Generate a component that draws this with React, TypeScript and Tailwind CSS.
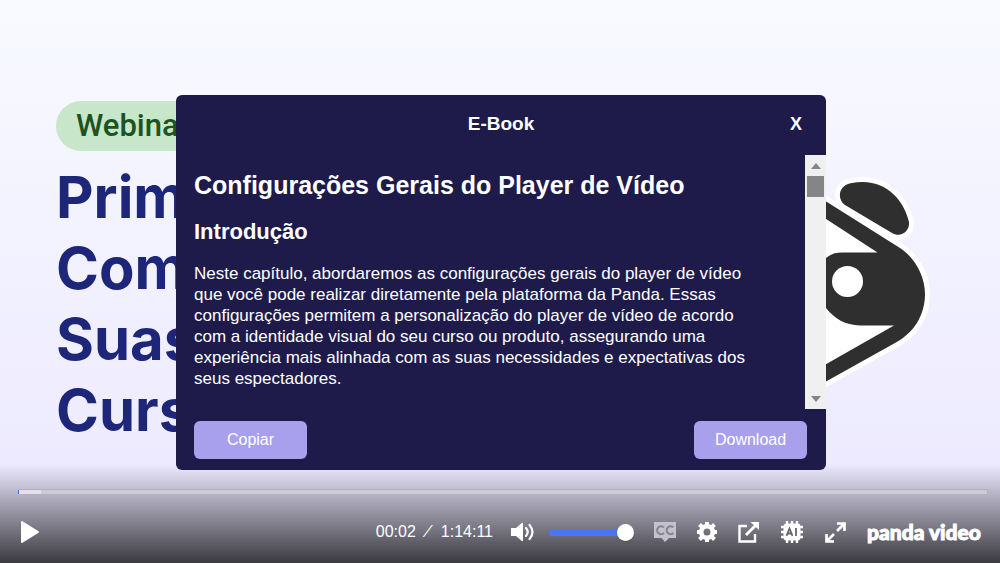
import { useState } from 'react'

const titleLines = ['Prim', 'Com', 'Suas', 'Curs']

function PandaHead() {
  return (
    <svg viewBox="800 170 130 230" className="w-[130px] h-[230px] shrink-0" aria-hidden="true">
      <g stroke="#fff" strokeWidth="10" strokeLinejoin="round" fill="#fff">
        <path d="M845 205 C837 199 838 185 852 183 C885 177 904 200 909 222 C910 232 900 238 892 233 Z" />
        <path d="M800 185 L900 248 C914 257 925 275 925 294 C925 315 914 333 895 343 L800 396 Z" />
      </g>
      <path
        fill="#2f2f2f"
        d="M845 205 C837 199 838 185 852 183 C885 177 904 200 909 222 C910 232 900 238 892 233 Z"
      />
      <path
        fill="#2f2f2f"
        d="M800 185 L900 248 C914 257 925 275 925 294 C925 315 914 333 895 343 L800 396 V379 L894 325.500 H860 C845 325 835 319 826 308 L816 290 L826 258 C831 254 835 252.500 842 252.500 H877.500 L800 202 Z"
      />
      <circle cx="847.500" cy="281.500" r="15.500" fill="#fff" />
    </svg>
  )
}

function PlayIcon() {
  return (
    <svg viewBox="0 0 20 24" className="w-5 h-6" fill="#fff" stroke="#fff" strokeWidth="2" strokeLinejoin="round">
      <path d="M2 2 V22 L18 12 Z" />
    </svg>
  )
}

function VolumeIcon() {
  return (
    <svg viewBox="0 0 24 20" className="w-6 h-5" fill="#fff">
      <path d="M0 6 h5 L10.500 1.200 q1.500-1 1.500 .5 V18.300 q0 1.500-1.500 .5 L5 14 H0 Z" />
      <path d="M15 6 q3.400 4 0 8 M18.500 3 q6 7 0 14" fill="none" stroke="#fff" strokeWidth="2.200" strokeLinecap="round" />
    </svg>
  )
}

function CaptionsIcon() {
  return (
    <svg viewBox="0 0 22 20" className="w-[22px] h-5">
      <path d="M0 0 H22 V16 H15 L11 20 L7.500 16 H0 Z" fill="#c3c1cb" />
      <path
        d="M10 5.400 A4 4 0 1 0 10 11 M19.500 5.400 A4 4 0 1 0 19.500 11"
        fill="none"
        stroke="#85838d"
        strokeWidth="2"
      />
    </svg>
  )
}

function GearIcon() {
  return (
    <svg viewBox="0 0 20 20" className="w-5 h-5" fill="none" stroke="#fff">
      <circle cx="10" cy="10" r="5.800" strokeWidth="4.600" />
      <path
        d="M10 0 V3 M10 17 V20 M0 10 H3 M17 10 H20 M2.500 2.500 L5 5 M15 15 L17.500 17.500 M17.500 2.500 L15 5 M5 15 L2.500 17.500"
        strokeWidth="4"
      />
    </svg>
  )
}

function ShareIcon() {
  return (
    <svg viewBox="0 0 21 21" className="w-[21px] h-[21px]" fill="none" stroke="#fff" strokeWidth="2.400">
      <path d="M9 4 H1.500 V19.500 H17 V12" />
      <path d="M8 13 L18 3" strokeWidth="2.800" />
      <path d="M12.500 0 H21 V8 Z" fill="#fff" stroke="none" />
    </svg>
  )
}

function AiChipIcon() {
  return (
    <svg viewBox="0 0 24 24" className="w-6 h-6">
      <path
        d="M7 1 V23 M12 1 V23 M17 1 V23 M1 7 H23 M1 12 H23 M1 17 H23"
        stroke="#fff"
        strokeWidth="2.400"
      />
      <rect x="3.500" y="3.500" width="17" height="17" rx="3" fill="#fff" />
      <path d="M6.500 15.800 L9.500 8.500 L12.500 15.800 M7.500 13.500 H11.500 M16 8 V16" fill="none" stroke="#65636c" strokeWidth="1.800" />
    </svg>
  )
}

function ExpandIcon() {
  return (
    <svg viewBox="0 0 21 21" className="w-[21px] h-[21px]" fill="none" stroke="#fff" strokeWidth="2.700">
      <path d="M12 1.500 H19.500 V9 M19 2 L12 9" />
      <path d="M9 19.500 H1.500 V12 M2 19 L9 12" />
    </svg>
  )
}

function ScrollBar() {
  return (
    <div className="w-[21px] shrink-0 bg-[#f0f0f0] flex flex-col items-center">
      <button aria-label="Rolar para cima" className="w-full h-[21px] flex items-center justify-center">
        <svg viewBox="0 0 10 6" className="w-2.5 h-1.5" fill="#858585">
          <path d="M0 6 L5 0 L10 6 Z" />
        </svg>
      </button>
      <div className="w-[17px] h-[21px] bg-[#858585]" />
      <button aria-label="Rolar para baixo" className="w-full h-[21px] mt-auto flex items-center justify-center">
        <svg viewBox="0 0 10 6" className="w-2.5 h-1.5" fill="#858585">
          <path d="M0 0 L10 0 L5 6 Z" />
        </svg>
      </button>
    </div>
  )
}

function EbookDialog() {
  return (
    <div className="absolute inset-0 pt-0.5 pl-0.5 flex items-center justify-center">
      <section role="dialog" aria-labelledby="ebook-title" className="w-[650px] max-w-full rounded-md bg-[#1e1b4b] text-white">
        <header className="h-[60px] grid grid-cols-[1fr_auto_1fr] items-center px-[18px] pb-0.5">
          <h2 id="ebook-title" className="col-start-2 text-[19px] leading-7 font-bold">
            E-Book
          </h2>
          <button aria-label="Fechar" className="justify-self-end w-6 text-lg font-bold">
            X
          </button>
        </header>
        <div className="h-[254px] flex">
          <article className="flex-1 overflow-hidden pl-[18px] pr-[41px] pt-[15px]">
            <h1 className="text-[25px] leading-[30px] font-bold">Configurações Gerais do Player de Vídeo</h1>
            <h2 className="mt-[18px] text-[22px] leading-[28px] font-bold">Introdução</h2>
            <p className="mt-[17px] text-[17px] leading-[21px]">
              Neste capítulo, abordaremos as configurações gerais do player de vídeo que você pode realizar
              diretamente pela plataforma da Panda. Essas configurações permitem a personalização do player de
              vídeo de acordo com a identidade visual do seu curso ou produto, assegurando uma experiência mais
              alinhada com as suas necessidades e expectativas dos seus espectadores.
            </p>
          </article>
          <ScrollBar />
        </div>
        <footer className="flex justify-between pl-[18px] pr-[19px] pt-3 pb-[11px]">
          <button className="w-[113px] h-[38px] rounded-md bg-[#a8a0ec] text-base">Copiar</button>
          <button className="w-[113px] h-[38px] rounded-md bg-[#a8a0ec] text-base">Download</button>
        </footer>
      </section>
    </div>
  )
}

function Controls() {
  const [volume, setVolume] = useState(100)
  const [position, setPosition] = useState(0)

  return (
    <div className="relative h-[99px] bg-linear-to-b from-black/0 to-black/75 pl-[18px] pr-3 pt-[25px] text-white">
      <input
        type="range"
        aria-label="Progresso"
        value={position}
        onChange={(e) => setPosition(Number(e.target.value))}
        className="block w-full h-[6px] appearance-none border-y border-r border-[#b3b0c0] bg-[linear-gradient(to_right,#3b6fe0_1px,#e2e0ee_1px,#e2e0ee_23px,#cdcad9_23px)] [&::-webkit-slider-thumb]:appearance-none [&::-webkit-slider-thumb]:w-px"
      />
      <div className="h-6 mt-[25px] flex items-center pl-0.5 pr-2">
        <button aria-label="Reproduzir">
          <PlayIcon />
        </button>
        <div className="ml-auto flex items-center text-base">
          <span>00:02</span>
          <span className="w-[25px] text-center italic">⁄</span>
          <span>1:14:11</span>
        </div>
        <button aria-label="Volume" className="ml-[18px]">
          <VolumeIcon />
        </button>
        <input
          type="range"
          aria-label="Nível do volume"
          value={volume}
          onChange={(e) => setVolume(Number(e.target.value))}
          className="ml-[14px] w-[85px] h-[7px] appearance-none rounded-full bg-[#4a77f0] [&::-webkit-slider-thumb]:appearance-none [&::-webkit-slider-thumb]:size-[17px] [&::-webkit-slider-thumb]:rounded-full [&::-webkit-slider-thumb]:bg-white [&::-webkit-slider-thumb]:shadow"
        />
        <div className="ml-5 flex items-center gap-[21px]">
          <button aria-label="Legendas">
            <CaptionsIcon />
          </button>
          <button aria-label="Configurações">
            <GearIcon />
          </button>
          <button aria-label="Compartilhar">
            <ShareIcon />
          </button>
          <button aria-label="Inteligência artificial">
            <AiChipIcon />
          </button>
          <button aria-label="Tela cheia">
            <ExpandIcon />
          </button>
        </div>
        <a
          href="#"
          className="ml-[21px] w-[113px] whitespace-nowrap font-['Lato'] text-[21px] leading-6 font-black [-webkit-text-stroke:1px_white]"
        >
          panda video
        </a>
      </div>
    </div>
  )
}

export default function App() {
  return (
    <main className="relative h-screen overflow-hidden flex flex-col bg-linear-to-b from-[#f8faff] to-[#ebe7ff] font-['Liberation_Sans',sans-serif]">
      <div className="flex-1 min-h-0 flex justify-between pl-14 pr-[70px] pt-[101px]">
        <div>
          <div className="w-[200px] h-[50px] pl-5 rounded-full bg-[#c8e6c9] text-[#1b5420] font-['Roboto'] font-medium text-[31px] leading-[50px]">
            Webina
          </div>
          <div className="mt-[11px] font-['Inter'] font-bold text-[58px] leading-[71px] text-[#1e2679]">
            {titleLines.map((line) => (
              <div key={line}>{line}</div>
            ))}
          </div>
        </div>
        <div className="pt-[69px]">
          <PandaHead />
        </div>
      </div>
      <Controls />
      <EbookDialog />
    </main>
  )
}
